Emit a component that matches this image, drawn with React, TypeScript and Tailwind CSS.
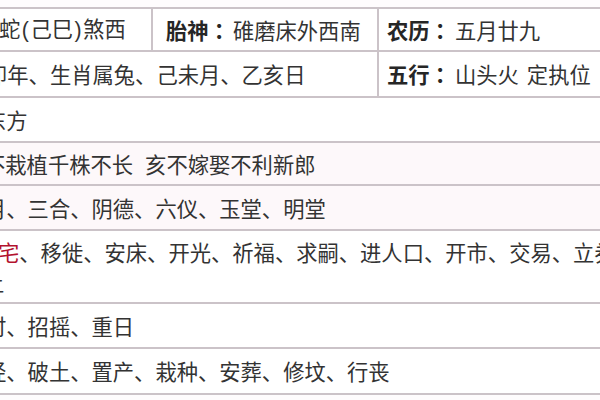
import React from 'react';

const line = 'border-[#cbc3c8]';

const Row: React.FC<{ h: string; tint?: boolean; children: React.ReactNode }> = ({ h, tint, children }) => (
  <div className={`flex items-center border-b-2 ${line} ${h} ${tint ? 'bg-[#fdf8fa]' : 'bg-white'} overflow-hidden whitespace-nowrap`}>
    {children}
  </div>
);

// label with a centred full-width colon, as in the almanac table
const Label: React.FC<{ text: string }> = ({ text }) => (
  <span className="font-bold text-[#262626]">
    {text}
    <span style={{ fontFamily: '"Noto Sans CJK TC", "Noto Sans CJK SC", sans-serif' }}>：</span>
  </span>
);

const Paren: React.FC<{ ch: string }> = ({ ch }) => (
  <span className="px-[1.5px]" style={{ fontFamily: '"Liberation Sans", sans-serif' }}>
    {ch}
  </span>
);

const App: React.FC = () => {
  return (
    <div
      className="w-[600px] h-[400px] overflow-hidden bg-[#fefcfd] pt-[7px] text-[21.3px] leading-none text-[#333333]"
      style={{ fontFamily: '"Noto Sans CJK SC", "Noto Sans", sans-serif' }}
    >
      <div className={`border-t-2 ${line}`}>
        {/* 冲煞 / 胎神 / 农历 */}
        <Row h="h-[43px]">
          <div className={`flex items-center h-full w-[153px] shrink-0 border-r-2 ${line} overflow-hidden`}>
            <span className="-ml-px">
              蛇<Paren ch="(" />己巳<Paren ch=")" />煞西
            </span>
          </div>
          <div className={`flex items-center h-full w-[226px] shrink-0 border-r-2 ${line} pl-[13px]`}>
            <Label text="胎神" />
            <span className="ml-[3px]">碓磨床外西南</span>
          </div>
          <div className="flex items-center h-full pl-[8px]">
            <Label text="农历" />
            <span className="ml-[4px]">五月廿九</span>
          </div>
        </Row>

        {/* 年月日 / 五行 */}
        <Row h="h-[46px]">
          <div className={`flex items-center h-full w-[379px] shrink-0 border-r-2 ${line} overflow-hidden`}>
            <span className="-ml-[14px]">卯年、生肖属兔、己未月、乙亥日</span>
          </div>
          <div className="flex items-center h-full pl-[8px]">
            <Label text="五行" />
            <span className="ml-[4px]">山头火</span>
            <span className="ml-[8px]">定执位</span>
          </div>
        </Row>

        {/* 方位 */}
        <Row h="h-[45px]">
          <span className="-ml-[15px]">东方</span>
        </Row>

        {/* 彭祖百忌 */}
        <Row h="h-[43px]" tint>
          <span className="-ml-[16px]">不栽植千株不长</span>
          <span className="ml-[12px]">亥不嫁娶不利新郎</span>
        </Row>

        {/* 吉神 */}
        <Row h="h-[45px]" tint>
          <span className="-ml-[15px]">月、三合、阴德、六仪、玉堂、明堂</span>
        </Row>

        {/* 宜 */}
        <div className={`flex flex-col justify-center border-b-2 ${line} h-[73px] bg-white overflow-hidden whitespace-nowrap leading-[30px]`}>
          <div className="-ml-[2px]">
            <span className="text-[#b3122e]">宅</span>、移徙、安床、开光、祈福、求嗣、进人口、开市、交易、立券
          </div>
          <div className="-ml-[17px]">土</div>
        </div>

        {/* 凶神 */}
        <Row h="h-[45px]">
          <span className="-ml-[15px]">时、招摇、重日</span>
        </Row>

        {/* 忌 */}
        <Row h="h-[46px]">
          <span className="-ml-[15px]">经、破土、置产、栽种、安葬、修坟、行丧</span>
        </Row>
      </div>
    </div>
  );
};

export default App;
